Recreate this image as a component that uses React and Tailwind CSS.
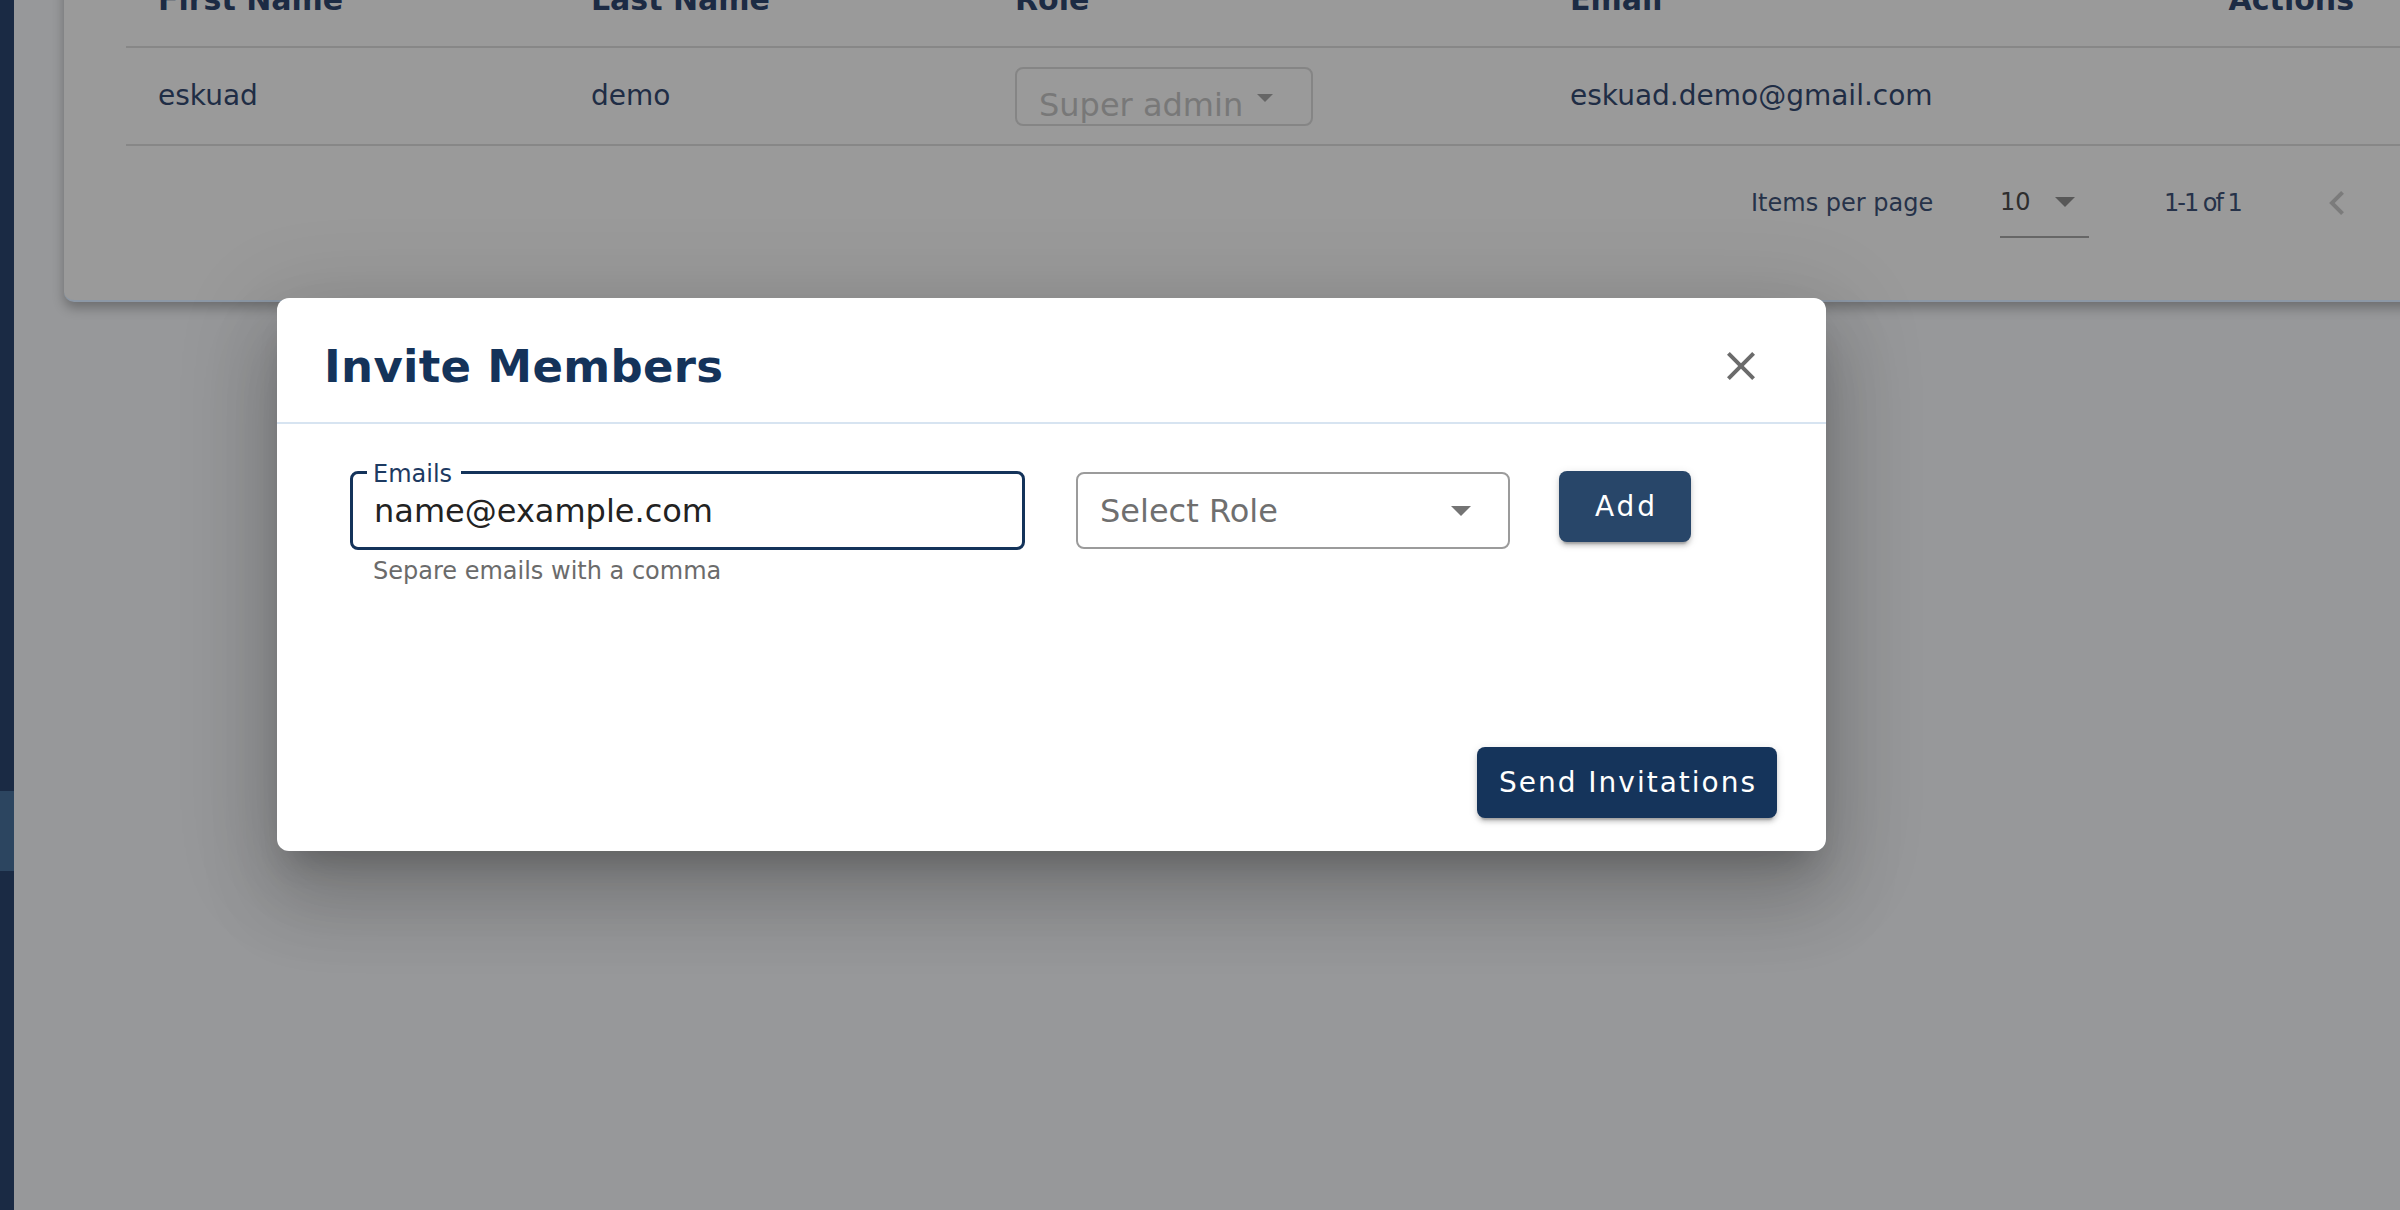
import React from "react";

const Caret = ({ w = 20, h = 10, color = "#707070" }) => (
  <svg width={w} height={h} viewBox="7 10 10 5" preserveAspectRatio="none">
    <path d="M7 10l5 5 5-5z" fill={color} />
  </svg>
);

export default function App() {
  return (
    <div className="relative flex h-[1210px] w-[2400px] overflow-hidden bg-[#97989a] font-['DejaVu_Sans',sans-serif]">
      {/* sidebar */}
      <aside className="flex w-[14px] shrink-0 flex-col bg-[#1a2a44]">
        <div className="mt-[791px] h-[80px] bg-[#2c4560]" />
      </aside>

      {/* page content */}
      <main className="min-w-0 flex-1 pl-[50px]">
        <div className="-mt-[52px] w-[2400px] rounded-bl-[10px] border-b-2 border-[#8c98a6] bg-[#9a9a9a] pb-[40px] pl-[62px] shadow-[0_6px_12px_rgba(0,0,0,0.28)]">
          {/* header */}
          <div className="flex h-[100px] items-end border-b-2 border-[#878787] pb-[31px] text-[30px] font-bold leading-none text-[#1c2b44]">
            <div className="w-[433px] pl-[32px]">First Name</div>
            <div className="w-[424px] pl-[32px]">Last Name</div>
            <div className="w-[555px] pl-[32px]">Role</div>
            <div className="w-[650px] pl-[32px]">Email</div>
            <div className="w-[198px] pr-[32px] text-right">Actions</div>
          </div>
          {/* row */}
          <div className="flex h-[98px] items-center border-b-2 border-[#878787] text-[28px] leading-none text-[#1f2d45]">
            <div className="w-[433px] pl-[32px]">eskuad</div>
            <div className="w-[424px] pl-[32px]">demo</div>
            <div className="w-[555px] pl-[32px]">
              <div className="flex h-[59px] w-[298px] items-start rounded-[8px] border-2 border-[#858585] pl-[22px] pt-[20px]">
                <span className="text-[32px] leading-none text-[#787878]">Super admin</span>
                <span className="ml-[14px] mt-[5px]">
                  <Caret w={16} h={8} color="#666666" />
                </span>
              </div>
            </div>
            <div className="w-[650px] pl-[32px]">eskuad.demo@gmail.com</div>
            <div className="w-[198px]" />
          </div>
          {/* pagination */}
          <div className="flex h-[114px] items-center pl-[1625px] text-[24px] leading-none text-[#263249]">
            <div className="w-[249px]">Items per page</div>
            <div className="flex h-[70px] w-[89px] items-center border-b-2 border-[#666666]">
              <span className="text-[#2e2e2e]">10</span>
              <span className="ml-[24px]">
                <Caret color="#585858" />
              </span>
            </div>
            <div className="ml-[75px] w-[165px] tracking-[-2px]">1-1 of 1</div>
            <svg width="15" height="24" viewBox="8 6 7.41 12">
              <path d="M15.41 7.41 14 6l-6 6 6 6 1.41-1.41L10.83 12z" fill="#7b7b7b" />
            </svg>
          </div>
        </div>
      </main>

      {/* modal */}
      <div className="absolute left-[277px] top-[298px] flex h-[553px] w-[1549px] flex-col rounded-[12px] bg-white shadow-[0_22px_30px_-14px_rgba(0,0,0,0.2),0_48px_76px_6px_rgba(0,0,0,0.14),0_18px_92px_16px_rgba(0,0,0,0.12)]">
        <div className="flex h-[124px] items-center justify-between pl-[47px] pr-[61px] pt-[12px]">
          <h2 className="text-[45px] font-bold leading-none tracking-[0.3px] text-[#14335a]">Invite Members</h2>
          <svg width="48" height="48" viewBox="0 0 24 24">
            <path
              d="M19 6.41 17.59 5 12 10.59 6.41 5 5 6.41 10.59 12 5 17.59 6.41 19 12 13.41 17.59 19 19 17.59 13.41 12z"
              fill="#6b6b6b"
            />
          </svg>
        </div>
        <div className="h-[2px] bg-[#d7e4f1]" />
        <div className="flex flex-1 flex-col">
          <div className="flex items-start pl-[73px] pt-[47px]">
            <div className="flex w-[675px] flex-col">
              <div className="relative flex h-[79px] items-center rounded-[8px] border-[3px] border-[#14335a] pl-[21px]">
                <span className="absolute -top-[12px] left-[14px] bg-white pl-[6px] pr-[9px] text-[24px] leading-none text-[#1d3a62]">
                  Emails
                </span>
                <span className="text-[32px] leading-none text-[#222222]">name@example.com</span>
              </div>
              <div className="ml-[23px] mt-[9px] text-[24px] leading-none text-[#6b6b6b]">
                Separe emails with a comma
              </div>
            </div>
            <div className="ml-[51px] mt-[1px] flex h-[77px] w-[434px] items-center justify-between rounded-[8px] border-2 border-[#9b9b9b] pl-[22px] pr-[37px]">
              <span className="text-[32px] leading-none text-[#6f6f6f]">Select Role</span>
              <Caret color="#747474" />
            </div>
            <button className="ml-[49px] flex h-[71px] w-[132px] items-center justify-center rounded-[8px] bg-[#284669] pl-[3px] text-[28px] leading-none tracking-[3px] text-white shadow-[0_6px_2px_-4px_rgba(0,0,0,0.2),0_4px_4px_0_rgba(0,0,0,0.14),0_2px_10px_0_rgba(0,0,0,0.12)]">
              Add
            </button>
          </div>
          <div className="mt-auto flex justify-end pb-[33px] pr-[49px]">
            <button className="flex h-[71px] w-[300px] items-center justify-center rounded-[8px] bg-[#15345b] pl-[2px] text-[28px] leading-none tracking-[2px] text-white shadow-[0_6px_2px_-4px_rgba(0,0,0,0.2),0_4px_4px_0_rgba(0,0,0,0.14),0_2px_10px_0_rgba(0,0,0,0.12)]">
              Send Invitations
            </button>
          </div>
        </div>
      </div>
    </div>
  );
}
